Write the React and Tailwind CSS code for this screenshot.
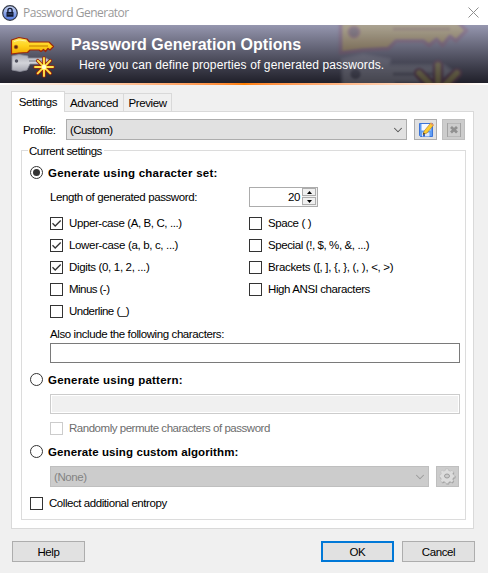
import { ChevronDown } from "lucide-react"

// Yellow + grey key pair with the "new" spark, used in the banner twice
function KeysIcon({ className = "", outline = "#9c260b" }) {
  return (
    <svg viewBox="0 0 46 42" className={className} fill="none" aria-hidden="true">
      <defs>
        <linearGradient id="gold" x1="0" y1="0" x2="0" y2="1">
          <stop offset="0" stopColor="#ffe95a" />
          <stop offset="0.5" stopColor="#ffd21c" />
          <stop offset="1" stopColor="#f0a800" />
        </linearGradient>
        <linearGradient id="silver" x1="0" y1="0" x2="0" y2="1">
          <stop offset="0" stopColor="#a9aab3" />
          <stop offset="0.5" stopColor="#d3d4da" />
          <stop offset="1" stopColor="#a3a4ae" />
        </linearGradient>
      </defs>
      <path
        d="M2 20 9 18.500 18 20V22H36L39 24 34 28H20L17 34 10 35.500 2 34Z"
        fill="url(#silver)"
        stroke="#8d8e99"
        strokeWidth="0.800"
      />
      <path d="M19 25H34" stroke="#777883" />
      <circle cx="6.500" cy="25" r="1.700" fill="#50515f" />
      <path
        d="M1.500 4 9 1.500 17 3 19.500 6H39L43.500 10.500 40 14 38 12.500 35.500 15.500 33.500 13.500 31 15.500 29 14H20L17.500 16.500 9 17 1.500 18Z"
        fill="url(#gold)"
        stroke={outline}
        strokeWidth="1.200"
        strokeLinejoin="round"
      />
      <path d="M19 10H38" stroke="#c07a00" />
      <path d="M4 5.500 9 4 16 5" stroke="#fff3a0" />
      <circle cx="6" cy="11" r="1.800" fill="#5c3010" stroke="#a5481a" strokeWidth="0.700" />
      <path
        d="M34 22V40M25 31H43M27.700 24.700 40.300 37.300M40.300 24.700 27.700 37.300"
        stroke={outline}
        strokeWidth="3.600"
        strokeLinecap="round"
      />
      <path
        d="M34 22V40M25 31H43M27.700 24.700 40.300 37.300M40.300 24.700 27.700 37.300"
        stroke="#ffe54b"
        strokeWidth="1.900"
        strokeLinecap="round"
      />
      <circle cx="34" cy="31" r="2.200" fill="#fffbd0" />
    </svg>
  )
}

function LockIcon() {
  return (
    <svg viewBox="0 0 16 16" className="size-4" aria-hidden="true">
      <defs>
        <linearGradient id="lock" x1="0" y1="0" x2="0" y2="1">
          <stop offset="0" stopColor="#c8d4f2" />
          <stop offset="1" stopColor="#5078e0" />
        </linearGradient>
      </defs>
      <circle cx="8" cy="8" r="7.300" fill="url(#lock)" stroke="#343a48" strokeWidth="1.200" />
      <path d="M5.900 7.500V5.500a2.100 2.100 0 0 1 4.200 0V7.500" fill="none" stroke="#10172e" strokeWidth="1.300" />
      <rect x="4.500" y="7" width="7" height="4.800" rx="0.500" fill="#10172e" />
      <path d="M5.500 9H10.500" stroke="#5672b8" strokeWidth="0.700" />
    </svg>
  )
}

function SaveIcon() {
  return (
    <svg viewBox="0 0 16 16" className="size-4" aria-hidden="true">
      <path d="M1.500 1.500H14.500V14.500H2.500L1.500 13.500Z" fill="#5f9df5" stroke="#3b74d8" />
      <rect x="3.500" y="2" width="9" height="6.500" fill="#f5f9ff" />
      <path d="M4 14.500V10.500H11.500V14.500Z" fill="#dbe7fb" />
      <path d="M5 11.500V14.500H7V11.500Z" fill="#2f62c8" />
      <path d="M5 12.500 6.200 9 12.500 1.200 15.300 3.400 9 11Z" fill="#fccd32" stroke="#b47a20" strokeWidth="0.600" />
      <path d="M12.100 1.700 13.100 0.500 15.800 2.400 14.900 3.900Z" fill="#e89a60" />
      <path d="M5 12.500 5.600 10.500 7 11.700Z" fill="#352b22" />
    </svg>
  )
}

function DeleteIcon() {
  return (
    <svg viewBox="0 0 16 16" className="size-4" aria-hidden="true">
      <path d="M1.500 1V15M14.500 1V15" stroke="#a3a3a3" />
      <path d="M2 1.500H14M2 14.500H14" stroke="#b9b9b9" />
      <path d="M5 5 11 10.500M11 5 5 10.500" stroke="#909090" strokeWidth="2.800" />
    </svg>
  )
}

const COG =
  "M6.700 0.800H9.300L9.800 2.600 11.300 3.200 13 2.300 14.700 4 13.700 5.500 14.200 6.800 15.800 7.200V9.300L14.200 9.800 13.600 11.300 14.500 12.900 12.800 14.500 11.200 13.600 9.800 14.100 9.300 15.600H6.700L6.200 14.100 4.700 13.600 3.100 14.500 1.400 12.800 2.300 11.200 1.800 9.800 0.300 9.300V7L1.800 6.600 2.300 5.200 1.500 3.700 3.200 2.200 4.800 3.100 6.200 2.600Z"

function GearIcon() {
  return (
    <svg viewBox="0 0 17 17" className="size-[17px]" aria-hidden="true">
      <path d={COG} fill="#a0a0a0" transform="translate(0.700 0.900)" />
      <path d={COG} fill="#dcdcdc" stroke="#b6b6b6" strokeWidth="0.500" />
      <ellipse cx="8" cy="8" rx="2.500" ry="2" fill="#cbcbcb" stroke="#9c9c9c" strokeWidth="1" />
    </svg>
  )
}

function Checkbox({ checked, disabled, tracking, children }) {
  return (
    <div className={`flex h-[22px] items-center gap-[6px] ${disabled ? "text-[#6d6d6d]" : ""}`}>
      <span
        className={`flex size-[13px] shrink-0 items-center justify-center border bg-white ${
          disabled ? "border-[#cccccc]" : "border-[#333333]"
        }`}
      >
        {checked && (
          <svg viewBox="0 0 11 11" className="size-[11px]" aria-hidden="true">
            <path d="M1.500 5.300 4.200 8 9.700 2.500" fill="none" stroke="#333" strokeWidth="1.300" />
          </svg>
        )}
      </span>
      <span className={`whitespace-nowrap ${tracking || ""}`}>{children}</span>
    </div>
  )
}

function Radio({ checked, tracking, children }) {
  return (
    <div className="flex h-[13px] items-center gap-[5px]">
      <span className="flex size-[13px] shrink-0 items-center justify-center rounded-full border border-[#333333] bg-white">
        {checked && <span className="size-[7px] rounded-full bg-[#333333]" />}
      </span>
      <span className={`whitespace-nowrap text-[11.5px] font-bold ${tracking || "tracking-[0.15px]"}`}>
        {children}
      </span>
    </div>
  )
}

function Button({ primary, children }) {
  return (
    <div
      className={`flex h-[21px] w-[73px] items-center justify-center bg-[#e1e1e1] ${
        primary ? "border-2 border-[#0078d7]" : "border border-[#adadad]"
      }`}
    >
      {children}
    </div>
  )
}

export default function App() {
  return (
    <div className="flex h-[573px] w-[488px] flex-col overflow-hidden bg-[#f0f0f0] font-['Liberation_Sans',sans-serif] text-[11.5px] leading-[14px] tracking-[-0.4px] text-black">
      <header className="flex h-[25px] shrink-0 items-center bg-white pl-[2px] pr-[9px]">
        <LockIcon />
        <span className="ml-[5px] font-['Open_Sans',sans-serif] text-[12px] tracking-[-0.5px] text-[#999999]">Password Generator</span>
        <svg viewBox="0 0 11 11" className="ml-auto size-[11px]" aria-hidden="true">
          <path d="M0.500 0.500 10.500 10.500M10.500 0.500 0.500 10.500" stroke="#8f8f8f" strokeWidth="1" />
        </svg>
      </header>

      {/* Banner: the oversized key pair is faded into the right side */}
      <div className="relative flex h-[58px] shrink-0 overflow-hidden bg-linear-to-b from-[#9697af] to-[#20202a] text-white">
        <KeysIcon outline="#8a3a50" className="absolute left-[336px] top-[-26px] h-[126px] w-[138px] opacity-20 blur-[1px]" />
        <KeysIcon className="ml-[10px] mt-[11px] h-[42px] w-[46px] shrink-0" />
        <div className="relative ml-[15px] pt-[11px]">
          <div className="whitespace-nowrap text-[16px] font-bold leading-[18px] tracking-[0.03px]">Password Generation Options</div>
          <div className="ml-[8px] mt-[4px] whitespace-nowrap text-[12px] leading-[14px] tracking-[0.12px]">
            Here you can define properties of generated passwords.
          </div>
        </div>
      </div>
      <div className="h-[2px] shrink-0 bg-linear-to-r from-white via-[#ff8000] to-white" />

      <main className="flex flex-col pl-[11px] pt-[6px]">
        <nav className="relative z-10 -mb-px flex h-[21px] items-end">
          <div className="h-[21px] w-[54px] border border-b-0 border-[#d9d9d9] bg-white pt-[3px] text-center">Settings</div>
          <div className="h-[19px] w-[59px] border border-l-0 border-[#d9d9d9] pt-[2px] text-center">Advanced</div>
          <div className="h-[19px] w-[48px] border border-l-0 border-[#d9d9d9] pt-[2px] text-center">Preview</div>
        </nav>

        <section className="h-[418px] w-[463px] border border-[#d9d9d9] bg-white pl-[9px] pt-[7px]">
          <div className="flex h-[21px] items-center">
            <span className="w-[45px] pl-[2px]">Profile:</span>
            <div className="flex h-[21px] w-[341px] items-center justify-between border border-[#adadad] bg-[#e1e1e1] pl-[3px] pr-[1px]">
              <span className="tracking-[-0.6px]">(Custom)</span>
              <ChevronDown className="size-[14px]" strokeWidth={1.8} color="#555" />
            </div>
            <div className="ml-[7px] flex h-[21px] w-[23px] items-center justify-center border border-[#adadad] bg-[#e1e1e1]">
              <SaveIcon />
            </div>
            <div className="ml-[5px] flex h-[21px] w-[23px] items-center justify-center border border-[#bfbfbf] bg-[#cccccc]">
              <DeleteIcon />
            </div>
          </div>

          <div className="mt-[10px] h-[370px] w-[445px] border border-[#dcdcdc] pl-[8px]">
            <div className="-mt-[7px] flex h-[14px]">
              <span className="-ml-[2px] whitespace-nowrap bg-white pl-px pr-[2px] tracking-[-0.52px]">Current settings</span>
            </div>
            <div className="mt-[8px]">
              <Radio checked tracking="tracking-[0.25px]">Generate using character set:</Radio>
            </div>

            <div className="ml-[20px] mt-[8px] flex h-[20px] w-[410px] items-center">
              <span className="w-[199px]">Length of generated password:</span>
              <div className="flex h-[20px] w-[69px] justify-end border border-[#acacac] bg-white">
                <span className="mr-[2px] leading-[18px]">20</span>
                <div className="flex w-[15px] flex-col gap-px bg-[#f0f0f0] pr-px">
                  <div className="flex h-[8px] items-center justify-center border border-[#adadad]">
                    <svg viewBox="0 0 5 3" className="h-[3px] w-[5px]"><path d="M0 3 2.500 0 5 3Z" /></svg>
                  </div>
                  <div className="flex h-[8px] items-center justify-center border border-[#adadad]">
                    <svg viewBox="0 0 5 3" className="h-[3px] w-[5px]"><path d="M0 0H5L2.500 3Z" /></svg>
                  </div>
                </div>
              </div>
            </div>

            <div className="ml-[20px] mt-[5px] flex">
              <div className="w-[199px]">
                <Checkbox checked>Upper-case (A, B, C, ...)</Checkbox>
                <Checkbox checked tracking="tracking-[-0.34px]">Lower-case (a, b, c, ...)</Checkbox>
                <Checkbox checked tracking="tracking-[-0.34px]">Digits (0, 1, 2, ...)</Checkbox>
                <Checkbox tracking="tracking-[-0.55px]">Minus (-)</Checkbox>
                <Checkbox tracking="tracking-[-0.5px]">Underline (_)</Checkbox>
              </div>
              <div>
                <Checkbox>Space ( )</Checkbox>
                <Checkbox>Special (!, $, %, &amp;, ...)</Checkbox>
                <Checkbox tracking="tracking-[-0.31px]">{"Brackets ([, ], {, }, (, ), <, >)"}</Checkbox>
                <Checkbox>High ANSI characters</Checkbox>
              </div>
            </div>

            <div className="ml-[20px] mt-[5px] h-[14px]">Also include the following characters:</div>
            <div className="ml-[20px] mt-[2px] h-[20px] w-[410px] border border-[#7a7a7a] bg-white" />

            <div className="mt-[10px]">
              <Radio tracking="tracking-[0.22px]">Generate using pattern:</Radio>
            </div>
            <div className="ml-[20px] mt-[8px] h-[20px] w-[410px] border border-[#cccccc] bg-[#f0f0f0] shadow-[inset_0_0_0_1px_white]" />
            <div className="ml-[20px] mt-[3px]">
              <Checkbox disabled tracking="tracking-[-0.47px]">Randomly permute characters of password</Checkbox>
            </div>

            <div className="mt-[6px]">
              <Radio tracking="tracking-[0.1px]">Generate using custom algorithm:</Radio>
            </div>
            <div className="ml-[20px] mt-[8px] flex h-[21px] gap-[7px]">
              <div className="flex w-[379px] items-center justify-between border border-[#bfbfbf] bg-[#cccccc] pl-[3px] pr-[1px] text-[#838383]">
                <span>(None)</span>
                <ChevronDown className="size-[14px]" strokeWidth={1.8} color="#9b9b9b" />
              </div>
              <div className="flex w-[23px] items-center justify-center border border-[#bfbfbf] bg-[#cccccc]">
                <GearIcon />
              </div>
            </div>
            <div className="mt-[5px]">
              <Checkbox tracking="tracking-[-0.44px]">Collect additional entropy</Checkbox>
            </div>
          </div>
        </section>

        <footer className="ml-px mt-[12px] flex">
          <Button>Help</Button>
          <div className="ml-[236px] flex gap-[8px]">
            <Button primary>OK</Button>
            <Button>Cancel</Button>
          </div>
        </footer>
      </main>
    </div>
  )
}
